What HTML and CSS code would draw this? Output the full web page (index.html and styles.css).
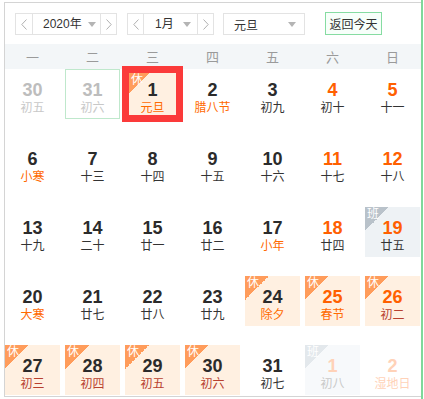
FILE: index.html
```html
<!DOCTYPE html>
<html lang="zh-CN">
<head>
<meta charset="utf-8">
<title>万年历</title>
<link rel="stylesheet" href="styles.css">
</head>
<body>
<div class="cal">
  <div class="toolbar">
    <div class="stepper year">
      <span class="step"><svg width="6" height="11" viewBox="0 0 6 11"><polyline points="5.5,0.5 0.8,5.5 5.5,10.5" fill="none" stroke="#b0b0b0" stroke-width="1"/></svg></span>
      <span class="sel"><span>2020年</span><i class="caret"></i></span>
      <span class="step"><svg width="6" height="11" viewBox="0 0 6 11"><polyline points="0.5,0.5 5.2,5.5 0.5,10.5" fill="none" stroke="#b0b0b0" stroke-width="1"/></svg></span>
    </div>
    <div class="stepper month">
      <span class="step"><svg width="6" height="11" viewBox="0 0 6 11"><polyline points="5.5,0.5 0.8,5.5 5.5,10.5" fill="none" stroke="#b0b0b0" stroke-width="1"/></svg></span>
      <span class="sel"><span>1月</span><i class="caret"></i></span>
      <span class="step"><svg width="6" height="11" viewBox="0 0 6 11"><polyline points="0.5,0.5 5.2,5.5 0.5,10.5" fill="none" stroke="#b0b0b0" stroke-width="1"/></svg></span>
    </div>
    <div class="select"><span>元旦</span><i class="caret"></i></div>
    <button class="today">返回今天</button>
  </div>
  <div class="weekdays">
    <span>一</span><span>二</span><span>三</span><span>四</span><span>五</span><span>六</span><span>日</span>
  </div>
  <div class="days">
    <div class="day other"><b>30</b><small>初五</small></div>
    <div class="day other hover"><b>31</b><small>初六</small></div>
    <div class="day rest today-cell"><i class="tag">休</i><b>1</b><small class="fest">元旦</small></div>
    <div class="day"><b>2</b><small class="fest">腊八节</small></div>
    <div class="day"><b>3</b><small>初九</small></div>
    <div class="day wknd"><b>4</b><small>初十</small></div>
    <div class="day wknd"><b>5</b><small>十一</small></div>

    <div class="day"><b>6</b><small class="fest">小寒</small></div>
    <div class="day"><b>7</b><small>十三</small></div>
    <div class="day"><b>8</b><small>十四</small></div>
    <div class="day"><b>9</b><small>十五</small></div>
    <div class="day"><b>10</b><small>十六</small></div>
    <div class="day wknd"><b>11</b><small>十七</small></div>
    <div class="day wknd"><b>12</b><small>十八</small></div>

    <div class="day"><b>13</b><small>十九</small></div>
    <div class="day"><b>14</b><small>二十</small></div>
    <div class="day"><b>15</b><small>廿一</small></div>
    <div class="day"><b>16</b><small>廿二</small></div>
    <div class="day"><b>17</b><small class="fest">小年</small></div>
    <div class="day wknd"><b>18</b><small>廿四</small></div>
    <div class="day wknd work"><i class="tag">班</i><b>19</b><small>廿五</small></div>

    <div class="day"><b>20</b><small class="fest">大寒</small></div>
    <div class="day"><b>21</b><small>廿七</small></div>
    <div class="day"><b>22</b><small>廿八</small></div>
    <div class="day"><b>23</b><small>廿九</small></div>
    <div class="day rest"><i class="tag">休</i><b>24</b><small class="fest">除夕</small></div>
    <div class="day rest wknd"><i class="tag">休</i><b>25</b><small class="fest">春节</small></div>
    <div class="day rest wknd"><i class="tag">休</i><b>26</b><small>初二</small></div>

    <div class="day rest"><i class="tag">休</i><b>27</b><small>初三</small></div>
    <div class="day rest"><i class="tag">休</i><b>28</b><small>初四</small></div>
    <div class="day rest"><i class="tag">休</i><b>29</b><small>初五</small></div>
    <div class="day rest"><i class="tag">休</i><b>30</b><small>初六</small></div>
    <div class="day"><b>31</b><small>初七</small></div>
    <div class="day next work"><i class="tag">班</i><b>1</b><small>初八</small></div>
    <div class="day next wknd"><b>2</b><small class="fest">湿地日</small></div>
  </div>
</div>
<div class="edge"></div>
</body>
</html>
```
FILE: styles.css
```css
html, body {
  margin: 0;
  padding: 0;
  background: #fff;
}

body {
  display: flex;
  align-items: stretch;
  width: 424px;
  height: 399px;
  padding-left: 4px;
  box-sizing: border-box;
  font-family: "Liberation Sans", "Noto Sans CJK SC", sans-serif;
  color: #333;
  overflow: hidden;
}

.cal {
  width: 416px;
  margin-top: 2px;
  align-self: flex-start;
  border-top: 1px solid #d4d4d4;
  border-left: 1px solid #d4d4d4;
  border-bottom: 1px solid #d4d4d4;
}

.edge {
  width: 2px;
  background: #7fd89a;
}

/* toolbar */
.toolbar {
  height: 41px;
  box-sizing: border-box;
  padding: 10px 0 0 10px;
  display: flex;
  align-items: flex-start;
  font-size: 12px;
}

.stepper {
  display: flex;
  height: 22px;
  box-sizing: border-box;
  border: 1px solid #e3e3e3;
}

.stepper .step {
  width: 15px;
  display: flex;
  align-items: center;
  justify-content: center;
}

.stepper .step:first-child {
  width: 16px;
  border-right: 1px solid #e3e3e3;
}

.stepper .step:last-child {
  border-left: 1px solid #e3e3e3;
}

.sel {
  display: flex;
  align-items: center;
  justify-content: space-between;
  line-height: 20px;
}

.year .sel {
  width: 67px;
  padding: 0 4px 0 10px;
  box-sizing: border-box;
}

.month {
  margin-left: 10px;
}

.month .step:first-child {
  width: 15px;
}

.month .sel {
  width: 53px;
  padding: 0 6px 0 11px;
  box-sizing: border-box;
}

.caret {
  width: 0;
  height: 0;
  border-left: 4px solid transparent;
  border-right: 4px solid transparent;
  border-top: 5px solid #b4b4b4;
}

.select {
  margin-left: 9px;
  width: 82px;
  height: 22px;
  box-sizing: border-box;
  border: 1px solid #e3e3e3;
  display: flex;
  align-items: center;
  justify-content: space-between;
  padding: 0 8px 0 10px;
}

.today {
  margin-left: 20px;
  margin-top: -1px;
  width: 57px;
  height: 23px;
  box-sizing: border-box;
  border: 1px solid #86dca2;
  background: #f7fffa;
  font: inherit;
  font-size: 12px;
  color: #333;
  padding: 0;
}

/* weekday header */
.weekdays {
  height: 25px;
  background: #f3f6f8;
  display: grid;
  grid-template-columns: repeat(6, 60px) 55px;
  align-items: center;
  font-size: 13px;
  color: #9a9a9a;
}

.weekdays span {
  width: 55px;
  text-align: center;
}

/* days grid */
.days {
  display: grid;
  grid-template-columns: repeat(6, 60px) 55px;
  grid-auto-rows: 50px;
  row-gap: 19px;
  padding-bottom: 1px;
}

.day {
  position: relative;
  width: 55px;
  box-sizing: border-box;
  padding-top: 11px;
  display: flex;
  flex-direction: column;
  align-items: center;
}

.day b {
  font-size: 18px;
  line-height: 20px;
  font-weight: bold;
  color: #2b2b2b;
}

.day small {
  margin-top: 1px;
  font-size: 12px;
  line-height: 14px;
  color: #333;
}

.day small.fest {
  color: #ff6a00;
}

.day.wknd b {
  color: #ff6000;
}

.day.other b {
  color: #bdbdbd;
}

.day.other small {
  color: #c8c8c8;
}

.day.hover {
  border: 1px solid #bfe8cc;
  padding-top: 10px;
}

.day.rest {
  background: #fff0e1;
}

.day.rest small {
  color: #b8402f;
}

.day.rest small.fest {
  color: #ff6a00;
}

.day.work {
  background: #eef2f5;
}

.day.next {
  background: transparent;
}

.day.next.work {
  background: #f7f9fb;
}

.day.next b,
.day.next small.fest {
  color: #ffd2b8;
}

.day.next small {
  color: #c9c9c9;
}

.tag {
  position: absolute;
  left: 0;
  top: 0;
  width: 24px;
  height: 24px;
  font-style: normal;
  font-size: 12px;
  line-height: 14px;
  color: #fff;
  padding: 0 0 0 2px;
  box-sizing: border-box;
  background: linear-gradient(135deg, #ff9c5b 50%, transparent 50%);
}

.work .tag {
  background: linear-gradient(135deg, #b9c2ca 50%, transparent 50%);
}

.next.work .tag {
  background: linear-gradient(135deg, #e3e8ec 50%, transparent 50%);
}

.today-cell {
  box-shadow: 0 0 0 3px #fb3a3a, inset 0 0 0 4px #fb3a3a;
}

.today-cell .tag {
  left: 4px;
  top: 4px;
  width: 20px;
  height: 20px;
}
```
